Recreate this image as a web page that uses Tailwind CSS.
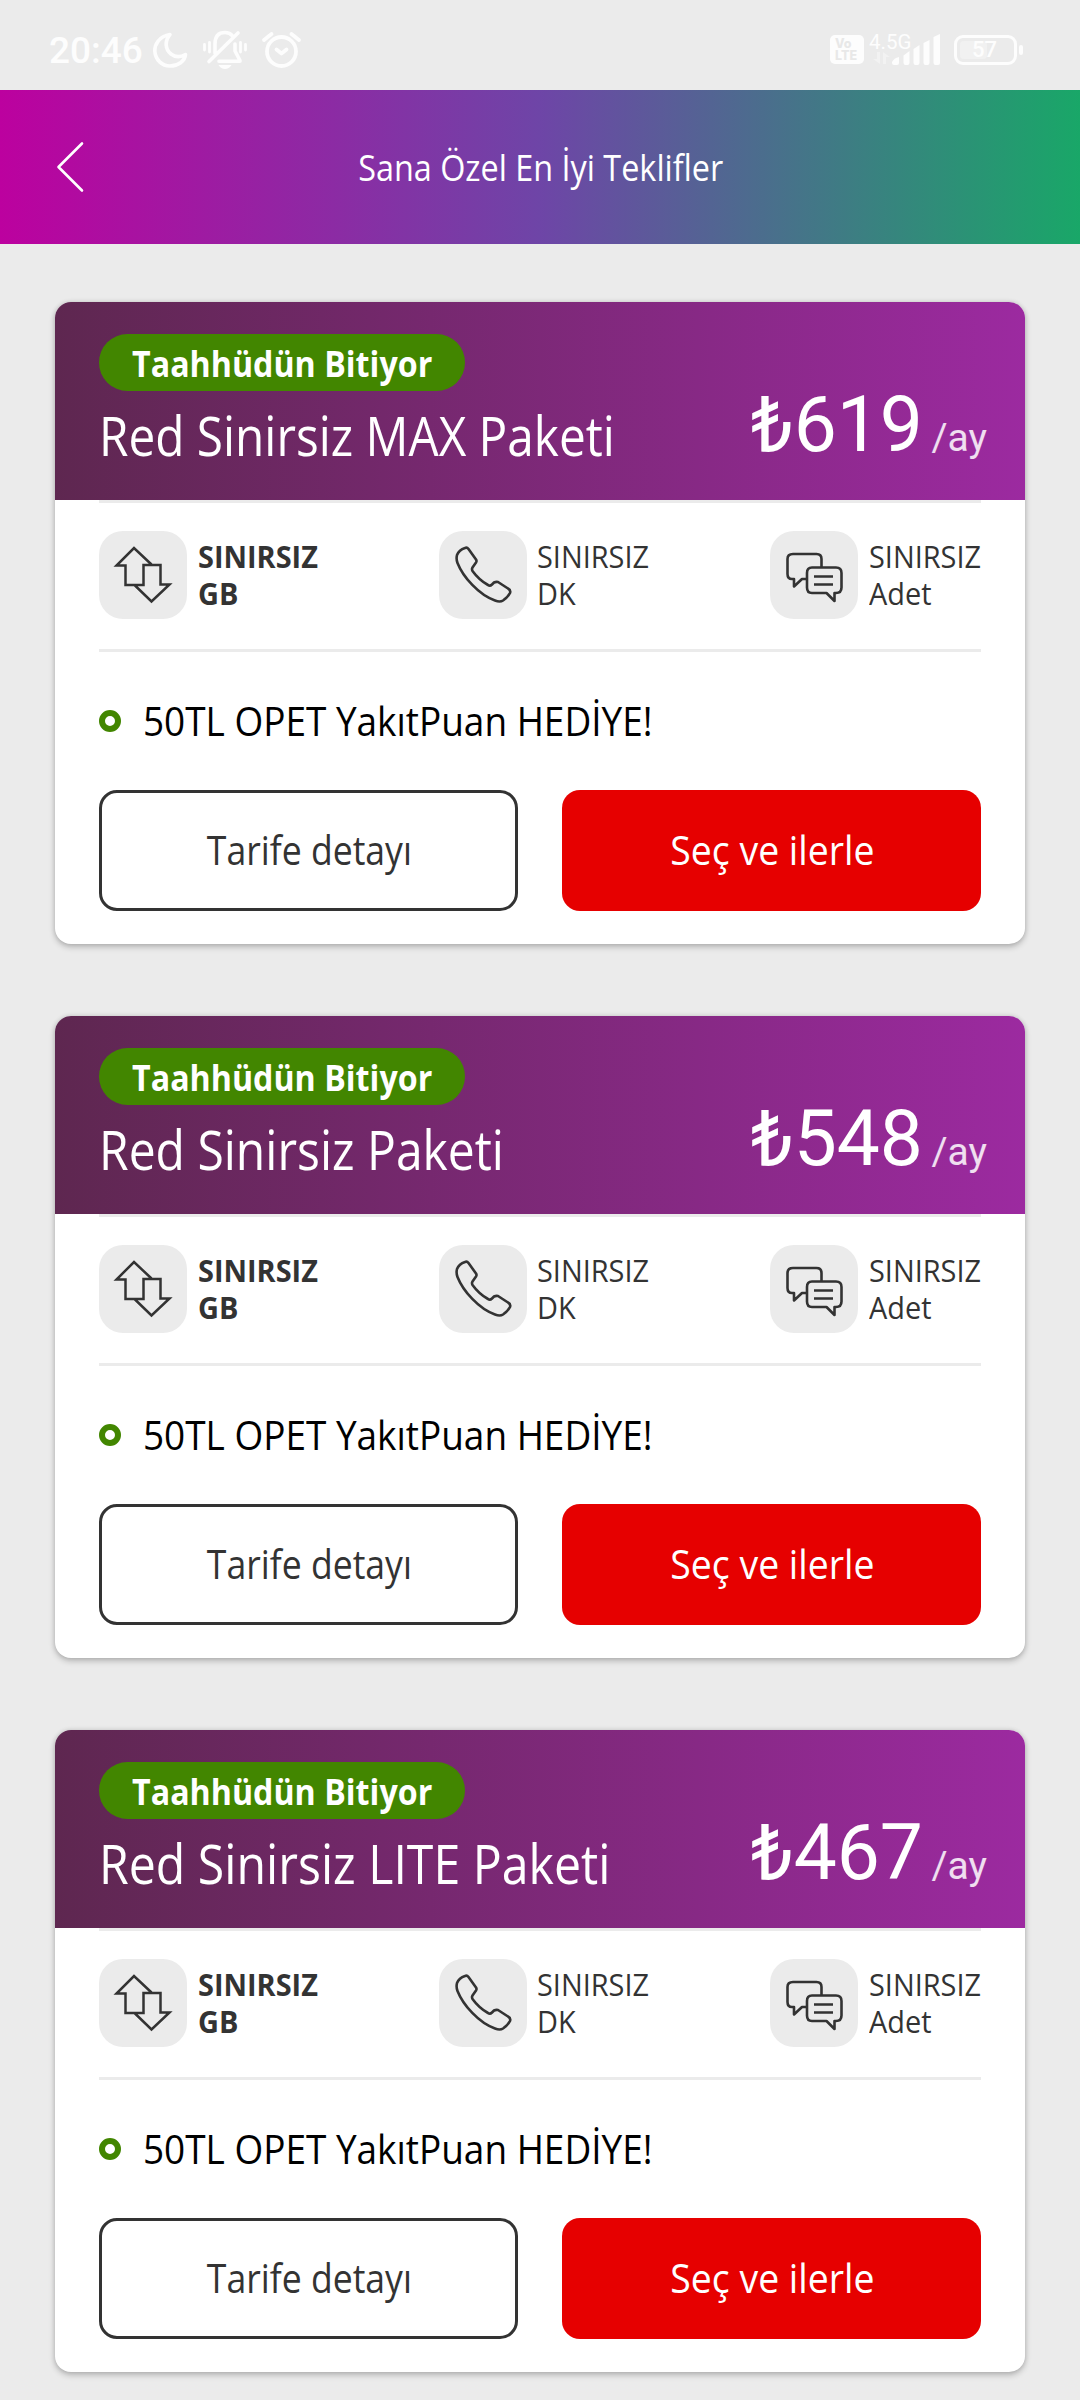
<!DOCTYPE html>
<html lang="tr">
<head>
<meta charset="utf-8">
<title>Sana Özel En İyi Teklifler</title>
<script src="https://cdn.jsdelivr.net/npm/@tailwindcss/browser@4"></script>
</head>
<body class="w-[1080px] h-[2400px] overflow-hidden bg-[#ebebeb] font-['Open_Sans',sans-serif] text-[#333]">

<!-- Status bar -->
<div class="flex h-[90px] items-center justify-between pl-[49px] pr-[57px] pt-[9px] font-['Roboto',sans-serif] text-[#fdfdfd]">
  <div class="flex items-center">
    <span class="block w-[103px] whitespace-nowrap text-[37px] leading-[40px] font-medium pt-[3px]">20:46</span>
    <svg class="h-[40px] w-[36px]" viewBox="151 29 36 40" fill="none" stroke="currentColor" stroke-width="3.6" stroke-linejoin="round"><path d="M169 33.500C158 35 153.500 44 153.800 50C154.500 59 161 65 169 65C177 65 184 60 184.500 53.500C180 56 174.500 56.500 170 53C164 48 163.500 40 169 33.500Z"/></svg>
    <svg class="ml-[14px] h-[42px] w-[46px]" viewBox="201 29 46 42" fill="none" stroke="currentColor" stroke-width="3.600" stroke-linecap="round" stroke-linejoin="round"><path d="M214 53V44C214 36 218 32.500 224 32.500C227 32.500 230 34 231.500 36M208 61.500L237 33M234 44V51L239 60.500V61.300H218"/><path stroke-width="2.800" d="M203.500 44.500V50M208.500 42.500V52M239.500 42.500V52M244.500 44.500V50"/><path fill="currentColor" stroke="none" d="M217.500 65H230.500Q228 69 224 69T217.500 65Z"/></svg>
    <svg class="ml-[13px] h-[40px] w-[42px]" viewBox="260 29 42 40" fill="none" stroke="currentColor" stroke-width="3.800" stroke-linecap="round" stroke-linejoin="round"><circle cx="280.500" cy="50.500" r="14.500"/><path d="M275.500 48.500L280.500 52.500L285.500 48.500M263 39L270.500 33M298 39L290.500 33"/></svg>
  </div>
  <div class="flex items-center">
    <div class="flex h-[29px] w-[34px] flex-col justify-center rounded-[5px] bg-[#fdfdfd] pl-[5px] font-['Inter',sans-serif] text-[12.5px] leading-[12px] font-extrabold text-[#e8e8e8]">
      <span>Vo</span>
      <span>LTE</span>
    </div>
    <div class="ml-[5px] flex h-[36px] w-[23px] flex-col">
      <span class="whitespace-nowrap text-[20.5px] leading-[20px]">4.5G</span>
      <svg class="ml-[4px] h-[12px] w-[17px] opacity-40" viewBox="0 0 17 12" fill="currentColor"><path d="M4 0H7V12L0 7H4ZM10 12V0L17 5H13V12Z"/></svg>
    </div>
    <svg class="h-[31px] w-[48px]" viewBox="892 34 48 31" fill="currentColor"><path d="M892 62Q894 58 899 57V63Q899 65 897 65H894Q892 65 892 63ZM903.500 55.500L909.500 51V63Q909.500 65 907.500 65H905.500Q903.500 65 903.500 63ZM913.500 49L919.500 45V63Q919.500 65 917.500 65H915.500Q913.500 65 913.500 63ZM923.500 43L929.500 40V63Q929.500 65 927.500 65H925.500Q923.500 65 923.500 63ZM933.500 37L940 34V63Q940 65 938 65H935.500Q933.500 65 933.500 63Z"/></svg>
    <div class="ml-[14px] flex h-[30px] w-[63px] items-center rounded-[9px] border-3 border-current p-[3px]">
      <div class="h-full w-[27px] rounded-[4px] bg-[#f1f1f1]"></div>
      <span class="-ml-[15px] pt-[1px] text-[22px] leading-[22px] font-medium">57</span>
    </div>
    <div class="ml-[2px] h-[10px] w-[4px] rounded-full bg-current"></div>
  </div>
</div>

<!-- App bar -->
<header class="grid h-[154px] grid-cols-[120px_1fr_120px] items-center bg-linear-to-r/srgb from-[#bc019f] via-[#6e45a7] to-[#19a768] text-white">
  <svg class="ml-[55px] h-[52px] w-[30px]" viewBox="0 0 30 52" fill="none" stroke="currentColor" stroke-width="2.600" stroke-linecap="round" stroke-linejoin="round"><path d="M27 2.500L3.500 26L27 49.500"/></svg>
  <h1 class="justify-self-center scale-x-[.887] pl-[2px] pb-px text-[36.5px] leading-[50px] whitespace-nowrap">Sana Özel En İyi Teklifler</h1>
</header>

<main id="offers" class="flex flex-col gap-[72px] px-[55px] pt-[58px]"></main>

<script>
const offers = [
  { name: 'Red Sinirsiz MAX Paketi', price: 619, stretch: 0.884 },
  { name: 'Red Sinirsiz Paketi', price: 548, stretch: 0.889 },
  { name: 'Red Sinirsiz LITE Paketi', price: 467, stretch: 0.893 },
];

document.getElementById('offers').innerHTML = offers.map(o => `
<article class="h-[642px] rounded-[16px] bg-white shadow-[0_3px_6px_rgba(0,0,0,.22),0_0_5px_rgba(0,0,0,.12)]">
  <div class="flex h-[198px] justify-between rounded-t-[16px] bg-linear-to-r/srgb from-[#5e2750] to-[#9c2aa0] pl-[44px] pr-[38px] text-white">
    <div class="w-[520px] pt-[32px]">
      <div class="flex h-[57px] w-[366px] items-center justify-center rounded-full bg-[#428600]">
        <span class="scale-x-[.882] text-[36.5px] leading-[50px] font-bold whitespace-nowrap">Taahhüdün Bitiyor</span>
      </div>
      <h2 class="origin-left pt-[14px] text-[54px] leading-[60px] whitespace-nowrap" style="transform:scaleX(${o.stretch})">${o.name}</h2>
    </div>
    <p class="flex items-baseline gap-[9px] pt-[78px] font-['Roboto',sans-serif] leading-[90px] whitespace-nowrap">
      <span class="origin-right scale-x-[.983] text-[78px]">₺${o.price}</span><span class="text-[39px] text-white/85">/ay</span>
    </p>
  </div>
  <div class="ml-[44px] w-[882px]">
    <div class="flex h-[152px] border-y-3 border-[#ebebeb] pt-[28px] text-[31px] leading-[37px]">
      <div class="flex w-[340px] gap-[11px]">
        <svg class="size-[88px] shrink-0 rounded-[24px] bg-[#ebebeb]" viewBox="0 0 88 88" fill="none" stroke="currentColor" stroke-width="2.500"><path d="M52.500 33.500L35 17L17.500 34.500H26.500V54H44.500M35.500 54L52.500 70.500L70.500 53.500H61.500V34H44.500V54H35.500"/></svg>
        <p class="origin-left scale-x-[.933] pt-[7px] font-bold">SINIRSIZ<br>GB</p>
      </div>
      <div class="flex w-[331px] gap-[10px]">
        <svg class="size-[88px] shrink-0 rounded-[24px] bg-[#ebebeb]" viewBox="0 0 88 88" fill="none" stroke="currentColor" stroke-width="2.600" stroke-linejoin="round"><path d="M18 24Q20 19 26 17Q28 16 29.500 18L37 28.500Q38 30 37 31.500L33.500 36.500Q32.500 38 33.500 40Q40 49 49 54Q51 55.500 53 53.500L55 51.500Q57 50.500 59 51L69 57.500Q72 59 71 62Q69 66 64 69.500Q61 71.500 56 69.500C40 64 24 46 18.500 32Q17 28 18 24Z"/></svg>
        <p class="origin-left scale-x-[.932] pt-[7px]">SINIRSIZ<br>DK</p>
      </div>
      <div class="flex w-[211px] gap-[11px]">
        <svg class="size-[88px] shrink-0 rounded-[24px] bg-[#ebebeb]" viewBox="0 0 88 88" fill="none" stroke="currentColor" stroke-width="2.600" stroke-linejoin="round" stroke-linecap="round"><path d="M51.500 36V28Q51.500 23 46.500 23H23Q17.500 23 17.500 28V43Q17.500 48 22 48H24V55.500L32 48H36.500M42 36.500H66Q71.500 36.500 71.500 42V56.500Q71.500 62 66 62H64.500V70L56.500 62H42Q37 62 37 56.500V42Q37 36.500 42 36.500Z"/><path stroke-linecap="butt" d="M44 45.500H63M44 53.500H63"/></svg>
        <p class="origin-left scale-x-[.932] pt-[7px]">SINIRSIZ<br>Adet</p>
      </div>
    </div>
    <div class="flex h-[138px] items-center gap-[22px]">
      <span class="size-[22px] rounded-full border-6 border-[#428600]"></span>
      <span class="origin-left scale-x-[.901] pb-[2px] text-[41px] leading-[56px] whitespace-nowrap text-black">50TL OPET YakıtPuan HEDİYE!</span>
    </div>
    <div class="grid h-[121px] grid-cols-2 gap-[44px] text-[41px]">
      <button class="rounded-[18px] border-3 border-[#333]"><span class="block scale-x-[.868] pb-[1px] pl-[2px] whitespace-nowrap">Tarife detayı</span></button>
      <button class="rounded-[18px] bg-[#e60000] text-white"><span class="block scale-x-[.912] pb-[1px] pl-[2px] whitespace-nowrap">Seç ve ilerle</span></button>
    </div>
  </div>
</article>`).join('');
</script>
</body>
</html>
